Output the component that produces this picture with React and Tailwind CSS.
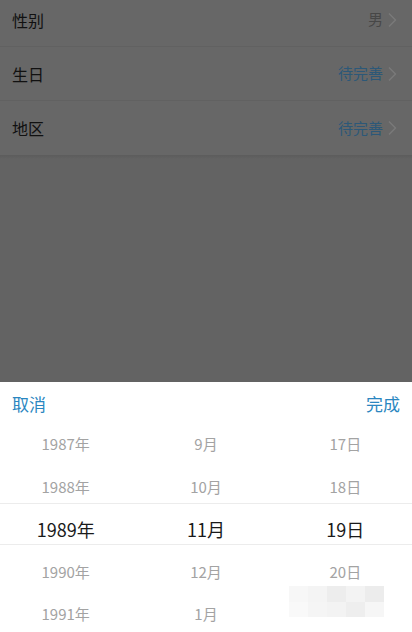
import React from "react";

const font = { fontFamily: '"Noto Sans CJK SC", "Noto Sans", Roboto, sans-serif' };

function Chevron() {
  return (
    <svg width="9" height="16" viewBox="0 0 9 16" className="ml-[5px]">
      <path d="M1 1.5 L7.5 8 L1 14.5" fill="none" stroke="#7a7a7a" strokeWidth="1.4" />
    </svg>
  );
}

function Row({ label, value, blue, border }) {
  return (
    <div className={`flex h-[54px] items-center justify-between pl-[12px] pr-[15px] ${border ? "border-b border-[#616161]" : ""}`}>
      <span className="text-[16px] text-[#111]">{label}</span>
      <span className="flex items-center">
        <span className={`text-[15px] ${blue ? "text-[#2c5878]" : "text-[#474747]"}`}>{value}</span>
        <Chevron />
      </span>
    </div>
  );
}

const years = ["1987年", "1988年", "1989年", "1990年", "1991年"];
const months = ["9月", "10月", "11月", "12月", "1月"];
const days = ["17日", "18日", "19日", "20日", ""];

function Column({ items, offset }) {
  return (
    <div className="flex flex-1 flex-col">
      {items.map((t, i) => (
        <div
          key={i}
          className={`flex h-[42.5px] items-center justify-center ${
            i === 2 ? "text-[18px] text-[#1a1a1a]" : "text-[15px] text-[#a3a3a3]"
          }`}
        >
          <span className={offset}>{t}</span>
        </div>
      ))}
    </div>
  );
}

export default function App() {
  return (
    <div className="relative flex h-[632px] w-[412px] flex-col overflow-hidden bg-[#636363]" style={font}>
      <div className="bg-[#676767]">
        <div className="-mt-[7px]">
          <Row label="性别" value="男" border />
          <Row label="生日" value="待完善" blue border />
          <Row label="地区" value="待完善" blue />
        </div>
      </div>
      <div className="h-[4px] bg-gradient-to-b from-[#5c5c5c] to-[#636363]" />
      <div className="flex-1" />
      <div className="h-[250px] bg-white">
        <div className="flex h-[47px] items-center justify-between px-[12px] pb-[3px]">
          <span className="text-[17px] text-[#2a86c0]">取消</span>
          <span className="text-[17px] text-[#2a86c0]">完成</span>
        </div>
        <div className="relative">
          <div className="pointer-events-none absolute left-0 right-0 top-[80px] h-[42px] border-y border-[#ececec]" />
          <div className="flex -mt-[6px]">
            <Column items={years} offset="-ml-[6px]" />
            <Column items={months} offset="" />
            <Column items={days} offset="ml-[4px]" />
          </div>
          <div className="absolute left-[289px] top-[163px] grid h-[31px] w-[95px] grid-cols-5 grid-rows-2 opacity-70">
            <div className="bg-[#f4f4f4]" />
            <div className="bg-[#f0f0f0]" />
            <div className="bg-[#e6e6e6]" />
            <div className="bg-[#eeeeee]" />
            <div className="bg-[#e4e4e4]" />
            <div className="bg-[#f7f7f7]" />
            <div className="bg-[#f2f2f2]" />
            <div className="bg-[#efefef]" />
            <div className="bg-[#e8e8e8]" />
            <div className="bg-[#f3f3f3]" />
          </div>
        </div>
      </div>
    </div>
  );
}
